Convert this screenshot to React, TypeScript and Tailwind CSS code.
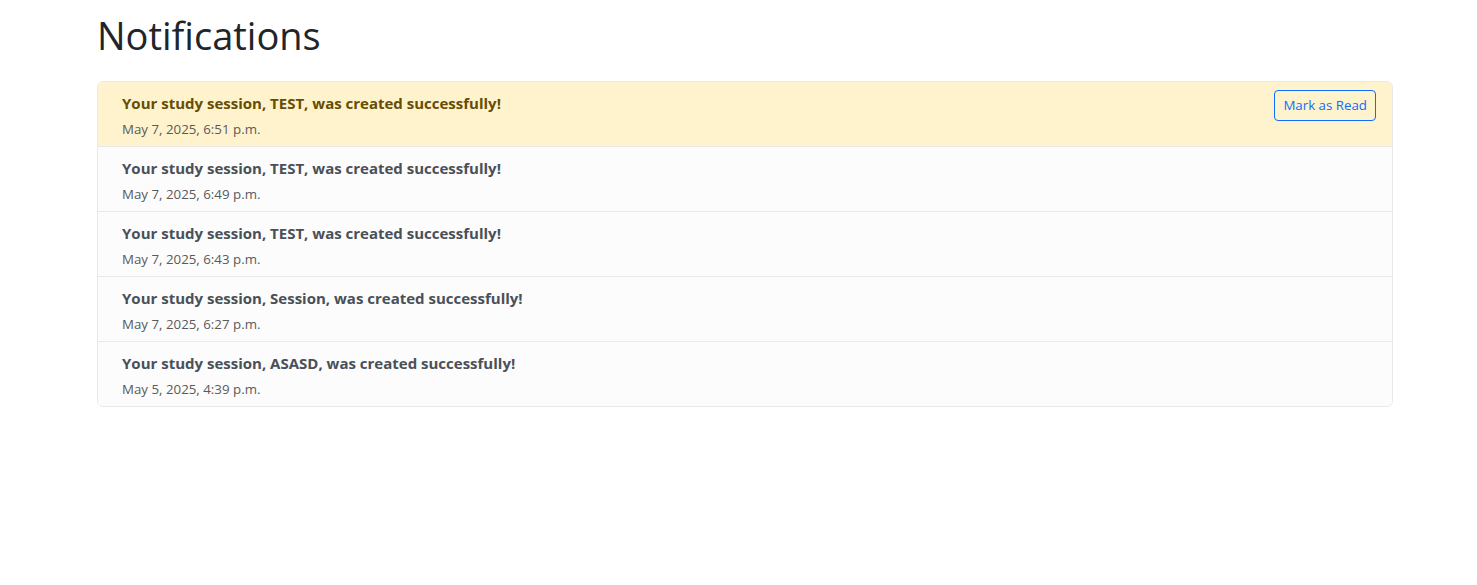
const notifications = [
  { msg: "Your study session, TEST, was created successfully!", date: "May 7, 2025, 6:51 p.m.", unread: true },
  { msg: "Your study session, TEST, was created successfully!", date: "May 7, 2025, 6:49 p.m.", unread: false },
  { msg: "Your study session, TEST, was created successfully!", date: "May 7, 2025, 6:43 p.m.", unread: false },
  { msg: "Your study session, Session, was created successfully!", date: "May 7, 2025, 6:27 p.m.", unread: false },
  { msg: "Your study session, ASASD, was created successfully!", date: "May 5, 2025, 4:39 p.m.", unread: false },
];

export default function App() {
  return (
    <div className="min-h-screen bg-white font-['Segoe_UI','Open_Sans',sans-serif] text-[#212529]">
      <div className="ml-[97px] w-[1296px] pt-[11px]">
        <h1 className="mb-[22px] text-[38px] font-normal leading-[48px]">Notifications</h1>

        <ul className="flex flex-col rounded-[6px] border border-[#e9e9ea] overflow-hidden">
          {notifications.map((n, i) => (
            <li
              key={i}
              className={`flex items-start justify-between px-4 pt-[9px] pb-[7px] ${
                i > 0 ? 'border-t' : ''
              } ${
                n.unread
                  ? 'bg-[#fff3cd] text-[#664d03] border-[#ffe69c]'
                  : 'bg-[#fcfcfc] text-[#495057] border-[#e9e9ea]'
              }`}
            >
              <div className="ml-2">
                <div className="mb-1 text-[15px] font-bold leading-6">{n.msg}</div>
                <div className="text-[13.3px] leading-5 text-[#5a5a5a]">{n.date}</div>
              </div>
              {n.unread && (
                <button className="mt-[-1px] rounded-[4px] border border-[#0d6efd] px-[8px] py-[4px] text-[13.3px] leading-[21px] text-[#0d6efd] bg-transparent">
                  Mark as Read
                </button>
              )}
            </li>
          ))}
        </ul>
      </div>
    </div>
  );
}
